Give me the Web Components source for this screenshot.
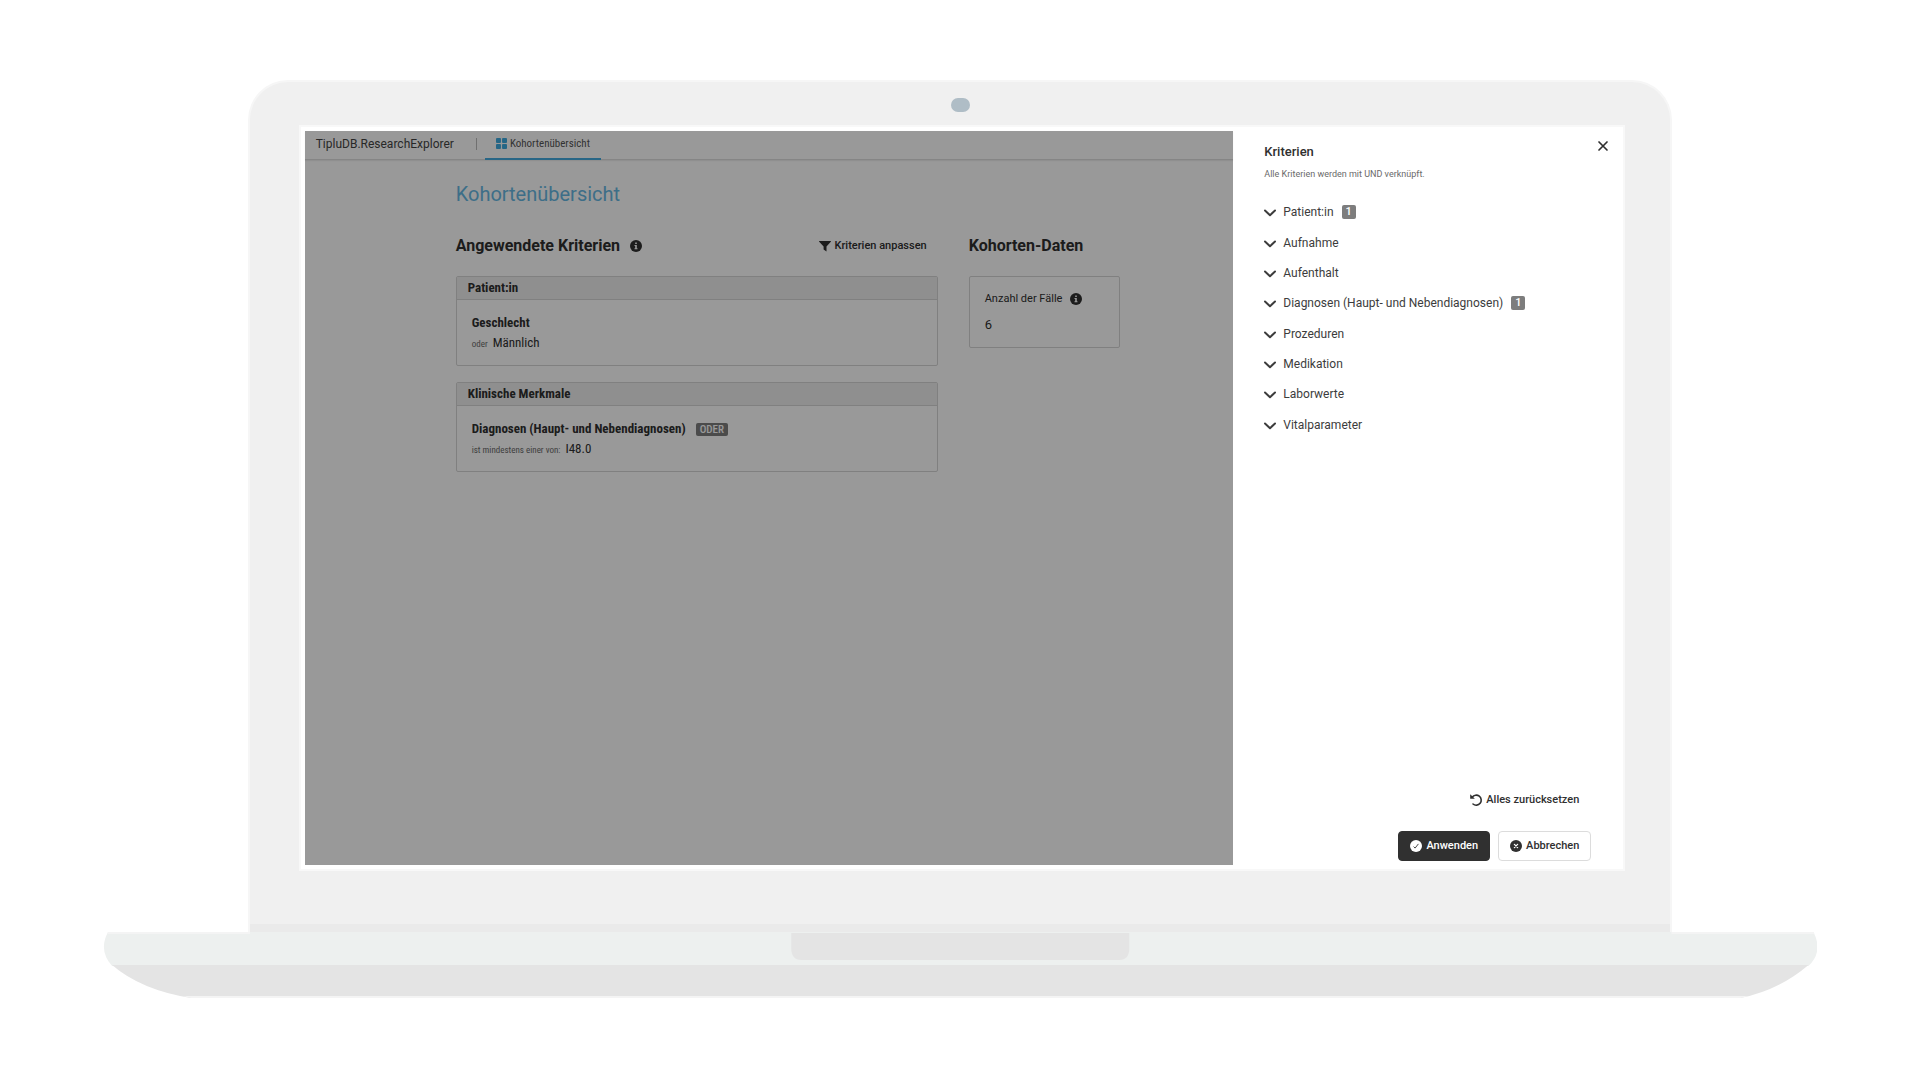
<!DOCTYPE html>
<html lang="de">
<head>
<meta charset="utf-8">
<meta name="viewport" content="width=device-width, initial-scale=1">
<title>TipluDB.ResearchExplorer</title>
<style>
body{
    margin: 0;
    background: #fff;
    color: #303030;
    font-family: Roboto, "Liberation Sans", sans-serif;
    font-size: 13px;
    line-height: 16px;
}
</style>
</head>
<body>
<laptop-frame>
    <research-app></research-app>
    <criteria-drawer></criteria-drawer>
</laptop-frame>

<script>
function makeTemplate(html){
    const template = document.createElement('template');
    template.innerHTML = html;
    return template;
}

class BaseElement extends HTMLElement {
    constructor(){
        super();
        this.attachShadow({mode:'open'});
        this.shadowRoot.appendChild(this.constructor.template.content.cloneNode(true));
    }
}

// Icons, all drawn on a 12x12 grid
const icons = {
    grid: '<rect width="5.4" height="5.4" rx="1"/><rect x="6.6" width="5.4" height="5.4" rx="1"/><rect y="6.6" width="5.4" height="5.4" rx="1"/><rect x="6.6" y="6.6" width="5.4" height="5.4" rx="1"/>',
    info: '<circle cx="6" cy="6" r="6"/><path fill="#fff" d="M5.2 2.4h1.6V4H5.2zM4.5 5h2.3v3.3h.7v1h-3v-1h.7V6h-.7z"/>',
    filter: '<path d="M.4 1h11.2c.4 0 .5.5.2.8L7.5 6.4v5L4.6 9.6V6.4L.2 1.8C-.1 1.5 0 1 .4 1z"/>',
    chevron: '<path d="M1 4.5l5 4.7 5-4.7" fill="none" stroke="currentColor" stroke-width="2" stroke-linecap="round" stroke-linejoin="round"/>',
    close: '<path d="M2 2l8 8M10 2l-8 8" fill="none" stroke="currentColor" stroke-width="1.7" stroke-linecap="round"/>',
    reset: '<path d="M2.2 3.2A5 5 0 1 1 3 10" fill="none" stroke="currentColor" stroke-width="1.6" stroke-linecap="round"/><path d="M.2.3v4.5h4.6L3.3 3.3z"/>',
    check: '<circle cx="6" cy="6" r="6"/><path d="M3.6 6.6l1.5 1.5 3.3-4.2" fill="none" stroke="#333" stroke-width=".9"/>',
    cancel: '<circle cx="6" cy="6" r="6"/><path d="M4.4 4.4l3.2 3.2M7.6 4.4L4.4 7.6" fill="none" stroke="#fff" stroke-width="1.3" stroke-linecap="round"/>'
};

class UiIcon extends HTMLElement {
    constructor(){
        super();
        this.attachShadow({mode:'open'});
    }
    connectedCallback(){
        this.shadowRoot.innerHTML = `
        <style>
        :host{ display:block; flex:none; width:12px; height:12px; }
        svg{ display:block; width:100%; height:100%; overflow:visible; }
        </style>
        <svg viewBox="0 0 12 12" fill="currentColor" aria-hidden="true">${icons[this.getAttribute('name')]}</svg>`;
    }
}
customElements.define('ui-icon', UiIcon);

class CountBadge extends BaseElement {
    static template = makeTemplate(`
    <style>
    :host{
        display:block;
        flex:none;
        padding:0 4px;
        border-radius:2px;
        background:#7d7d7d;
        color:#fff;
        font-size:11px;
        font-weight:500;
        line-height:14px;
    }
    </style>
    <slot></slot>`);
}
customElements.define('count-badge', CountBadge);

class CriteriaCard extends BaseElement {
    static template = makeTemplate(`
    <style>
    :host{
        display:block;
        border:1px solid #d6d6d6;
        border-radius:2px;
    }
    h3{
        margin:0;
        padding:3px 11px;
        background:#efefef;
        border-bottom:1px solid #d6d6d6;
        font-family:"Roboto Condensed", Roboto, sans-serif;
        font-size:13px;
        font-weight:700;
        line-height:16px;
    }
    .body{
        padding:13px 15px 11px;
        font-family:"Roboto Condensed", Roboto, sans-serif;
    }
    .name{
        display:flex;
        align-items:center;
        gap:10px;
        font-weight:700;
        line-height:20px;
    }
    .value{
        display:flex;
        align-items:baseline;
        gap:5px;
        line-height:20px;
    }
    .value slot[name=operator]{ display:block; color:#6a6a6a; font-size:9px; }
    </style>
    <h3><slot name="title"></slot></h3>
    <div class="body">
        <div class="name"><slot name="name"></slot></div>
        <div class="value"><slot name="operator"></slot><slot name="value"></slot></div>
    </div>`);
}
customElements.define('criteria-card', CriteriaCard);

class AppHeader extends BaseElement {
    static template = makeTemplate(`
    <style>
    :host{
        display:flex;
        height:28px;
        border-bottom:1px solid #dedede;
        box-shadow:0 1px 1px #eee;
    }
    .brand{ padding:5px 22px 0 11px; font-size:12px; color:#444; }
    .divider{ width:1px; height:12px; margin:7px 8px 0 0; background:#bbb; }
    a{
        display:flex;
        align-items:center;
        gap:3px;
        box-sizing:border-box;
        height:29px;
        padding:0 11px 2px;
        border-bottom:2px solid #43aadf;
        color:#555;
        font-family:"Roboto Condensed", Roboto, sans-serif;
        font-size:11px;
        text-decoration:none;
    }
    ui-icon{ width:11px; height:11px; color:#3fabe0; }
    </style>
    <div class="brand">TipluDB.ResearchExplorer</div>
    <div class="divider"></div>
    <nav><a href="#kohorten"><ui-icon name="grid"></ui-icon>Kohortenübersicht</a></nav>`);
}
customElements.define('app-header', AppHeader);

class ResearchApp extends BaseElement {
    static template = makeTemplate(`
    <style>
    :host{
        display:block;
        position:relative;
        flex:1;
        min-width:0;
        background:#fff;
    }
    main{ padding:20px 16px 20px 151px; }
    h1{
        margin:0 0 28px;
        color:#67b8e3;
        font-size:20px;
        font-weight:400;
        line-height:28px;
    }
    .columns{
        display:grid;
        grid-template-columns:minmax(0, 482px) 151px;
        gap:31px;
    }
    .head{
        display:flex;
        align-items:center;
        gap:10px;
        height:20px;
        margin-bottom:20px;
    }
    h2{ margin:0; font-size:16px; font-weight:700; line-height:20px; }
    button{
        display:flex;
        align-items:center;
        gap:4px;
        margin-left:auto;
        padding:0 11px;
        border:0;
        background:none;
        color:inherit;
        font:500 11px/16px Roboto, sans-serif;
        cursor:pointer;
    }
    criteria-card{ margin-bottom:16px; }
    count-badge{ line-height:13px; }
    .count{
        padding:14px 15px;
        border:1px solid #d6d6d6;
        border-radius:2px;
    }
    .label{ display:flex; align-items:center; gap:8px; font-size:11px; }
    .number{ margin-top:10px; }
    /* darkens the page while the drawer is open */
    .backdrop{
        position:absolute;
        inset:0;
        background:rgba(0, 0, 0, .4);
    }
    </style>
    <app-header></app-header>
    <main>
        <h1>Kohortenübersicht</h1>
        <div class="columns">
            <section>
                <div class="head">
                    <h2>Angewendete Kriterien</h2>
                    <ui-icon name="info"></ui-icon>
                    <button type="button"><ui-icon name="filter"></ui-icon>Kriterien anpassen</button>
                </div>
                <criteria-card>
                    <span slot="title">Patient:in</span>
                    <span slot="name">Geschlecht</span>
                    <span slot="operator">oder</span>
                    <span slot="value">Männlich</span>
                </criteria-card>
                <criteria-card>
                    <span slot="title">Klinische Merkmale</span>
                    <span slot="name">Diagnosen (Haupt- und Nebendiagnosen)</span>
                    <count-badge slot="name">ODER</count-badge>
                    <span slot="operator">ist mindestens einer von:</span>
                    <span slot="value">I48.0</span>
                </criteria-card>
            </section>
            <section>
                <div class="head"><h2>Kohorten-Daten</h2></div>
                <div class="count">
                    <div class="label">Anzahl der Fälle <ui-icon name="info"></ui-icon></div>
                    <div class="number">6</div>
                </div>
            </section>
        </div>
    </main>
    <div class="backdrop"></div>`);
}
customElements.define('research-app', ResearchApp);

class CriteriaGroup extends BaseElement {
    static template = makeTemplate(`
    <style>
    :host{ display:flex; align-items:center; }
    button{
        display:flex;
        align-items:center;
        gap:7px;
        padding:0;
        border:0;
        background:none;
        color:#3c3c3c;
        font:400 12px/16px Roboto, sans-serif;
        cursor:pointer;
    }
    </style>
    <button type="button" aria-expanded="false"><ui-icon name="chevron"></ui-icon><slot></slot></button>`);
}
customElements.define('criteria-group', CriteriaGroup);

class CriteriaDrawer extends BaseElement {
    static template = makeTemplate(`
    <style>
    :host{
        display:flex;
        flex-direction:column;
        box-sizing:border-box;
        flex:none;
        width:390px;
        padding:13px 32px 4px 31px;
        background:#fff;
    }
    header{ display:flex; justify-content:space-between; align-items:flex-start; }
    h2{ margin:0; font-size:13px; font-weight:500; line-height:16px; }
    p{ margin:6px 0 0; color:#6a6a6a; font-size:9px; line-height:16px; }
    button{
        display:flex;
        align-items:center;
        gap:4px;
        border:0;
        background:none;
        color:inherit;
        font:500 11px/16px Roboto, sans-serif;
        cursor:pointer;
    }
    .close{ margin:-7px -21px 0 0; padding:3px; }
    .groups{
        display:grid;
        grid-auto-rows:1fr;
        height:243px;
        margin-top:15px;
    }
    count-badge{ margin-left:1px; }
    footer{
        display:flex;
        flex-direction:column;
        align-items:flex-end;
        gap:23px;
        margin-top:auto;
    }
    .reset{ padding:0 12px; }
    .actions{ display:flex; gap:8px; }
    .actions button{
        height:30px;
        padding:0 11px;
        border:1px solid #dcdcdc;
        border-radius:4px;
    }
    .actions .primary{ border-color:#303030; background:#303030; color:#fff; }
    </style>
    <header>
        <div>
            <h2>Kriterien</h2>
            <p>Alle Kriterien werden mit UND verknüpft.</p>
        </div>
        <button class="close" type="button" aria-label="Schließen"><ui-icon name="close"></ui-icon></button>
    </header>
    <div class="groups">
        <criteria-group>Patient:in <count-badge>1</count-badge></criteria-group>
        <criteria-group>Aufnahme</criteria-group>
        <criteria-group>Aufenthalt</criteria-group>
        <criteria-group>Diagnosen (Haupt- und Nebendiagnosen) <count-badge>1</count-badge></criteria-group>
        <criteria-group>Prozeduren</criteria-group>
        <criteria-group>Medikation</criteria-group>
        <criteria-group>Laborwerte</criteria-group>
        <criteria-group>Vitalparameter</criteria-group>
    </div>
    <footer>
        <button class="reset" type="button"><ui-icon name="reset"></ui-icon>Alles zurücksetzen</button>
        <div class="actions">
            <button class="primary" type="button"><ui-icon name="check"></ui-icon>Anwenden</button>
            <button type="button"><ui-icon name="cancel"></ui-icon>Abbrechen</button>
        </div>
    </footer>`);
}
customElements.define('criteria-drawer', CriteriaDrawer);

// Laptop body around the slotted screen content
class LaptopFrame extends BaseElement {
    static template = makeTemplate(`
    <style>
    :host{ display:block; padding:80px 0; }
    .lid{
        box-sizing:border-box;
        width:74.2%;
        margin:0 auto;
        padding:0 45px 0 49px;
        border:solid #f6f6f6;
        border-width:2px 2px 0;
        border-radius:40px 40px 0 0;
        background:linear-gradient(#eaeaea, #eaeaea) bottom / 100% 8px no-repeat #f0f0f0;
    }
    .top{ display:flex; justify-content:center; height:27px; padding:16px 4px 0 0; }
    .camera{ width:19px; height:14px; border-radius:7px; background:#afbdc6; }
    .screen{
        display:flex;
        box-sizing:border-box;
        aspect-ratio:16 / 9;
        padding:4px 0 4px 4px;
        border:2px solid #f8f8f8;
        background:#fff;
    }
    .chin{ height:61px; }
    .base{ display:block; width:89.3%; margin:0 auto; }
    </style>
    <div class="lid">
        <div class="top"><div class="camera"></div></div>
        <div class="screen"><slot></slot></div>
        <div class="chin"></div>
    </div>
    <svg class="base" viewBox="0 0 1714 66" aria-hidden="true">
        <path fill="#edf0ef" d="M5 0H1710Q1720 20 1705 34H9Q-5 18 5 0z"/>
        <path fill="#e4e4e4" d="M9 33H1705Q1676 58 1637 66H88Q38 58 9 33z"/>
        <path fill="#e4e4e4" d="M688 1h338v15q0 12-10 12H698q-10 0-10-12z"/>
        <path fill="#f4f4f4" d="M5 0h142v2H4zM1568 0h142l1 2H1568zM80 64H1645l-8 2H88z"/>
    </svg>`);
}
customElements.define('laptop-frame', LaptopFrame);
</script>
</body>
</html>
